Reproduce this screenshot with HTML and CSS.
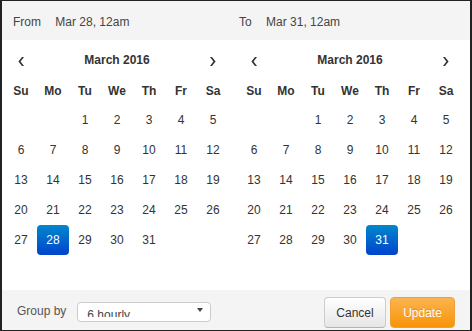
FILE: index.html
```html
<!DOCTYPE html>
<html lang="en">
<head>
    <meta charset="UTF-8">
    <meta name="viewport" content="width=device-width, initial-scale=1.0">
    <title>Date Range Picker</title>
    <link rel="stylesheet" href="styles.css">
</head>
<body>
    <div class="picker">
        <div class="range-bar">
            <div class="range-field range-from">
                <span class="range-label">From</span>
                <span class="range-value">Mar 28, 12am</span>
            </div>
            <div class="range-field">
                <span class="range-label">To</span>
                <span class="range-value">Mar 31, 12am</span>
            </div>
        </div>

        <div class="calendars">
            <div class="calendar" data-selected="28"></div>
            <div class="calendar" data-selected="31"></div>
        </div>

        <div class="footer">
            <span class="group-label">Group by</span>
            <div class="select">
                <div class="select-value">6 hourly</div>
                <span class="select-arrow"></span>
            </div>
            <div class="buttons">
                <button class="btn btn-cancel">Cancel</button>
                <button class="btn btn-update">Update</button>
            </div>
        </div>
    </div>

    <script>
        // build both month grids (March 2016 starts on a Tuesday)
        var chevronLeft = '<svg width="6" height="9" viewBox="0 0 6 9"><polygon points="4,0 6,0 2.6,4.5 6,9 4,9 0.4,4.5" fill="#333"/></svg>';
        var chevronRight = '<svg width="6" height="9" viewBox="0 0 6 9"><polygon points="2,0 0,0 3.4,4.5 0,9 2,9 5.6,4.5" fill="#333"/></svg>';
        var weekdays = ["Su", "Mo", "Tu", "We", "Th", "Fr", "Sa"];

        document.querySelectorAll(".calendar").forEach(function (cal) {
            var selected = cal.getAttribute("data-selected");
            var html = '<span class="cell nav">' + chevronLeft + '</span>';
            html += '<span class="month">March 2016</span>';
            html += '<span class="cell nav">' + chevronRight + '</span>';
            weekdays.forEach(function (d) {
                html += '<span class="cell dow">' + d + '</span>';
            });
            for (var i = 0; i < 2; i++) {
                html += '<span class="cell"></span>';
            }
            for (var day = 1; day <= 31; day++) {
                var cls = day == selected ? "cell day active" : "cell day";
                html += '<span class="' + cls + '">' + day + '</span>';
            }
            cal.innerHTML = html;
        });
    </script>
</body>
</html>
```

FILE: styles.css
```css
body {
    margin: 0;
    font-family: "Liberation Sans", Arial, sans-serif;
    font-size: 12px;
    color: #333;
}
.picker {
    width: 472px;
    height: 331px;
    box-sizing: border-box;
    border-style: solid;
    border-color: #222;
    border-width: 1px 2px 1px 2px;
    background-color: #fff;
    display: flex;
    flex-direction: column;
}
/* ---------------------------range bar------------------------------ */
.range-bar {
    height: 39px;
    display: flex;
    align-items: center;
    padding-left: 11px;
    padding-top: 2px;
    box-sizing: border-box;
    background-color: #f4f4f4;
    color: #444;
}
.range-from {
    width: 226px;
}
.range-label {
    margin-right: 11px;
}
/* ---------------------------calendars------------------------------ */
.calendars {
    display: flex;
    gap: 9px;
    padding: 5px 3px 5px 3px;
}
.calendar {
    width: 224px;
    display: grid;
    grid-template-columns: repeat(7, 32px);
    grid-auto-rows: 30px;
    grid-template-rows: repeat(8, 30px);
}
.cell {
    display: flex;
    align-items: center;
    justify-content: center;
}
.nav {
    padding-top: 3px;
}
.month {
    grid-column: span 5;
    display: flex;
    align-items: center;
    justify-content: center;
    font-weight: bold;
}
.dow {
    font-weight: bold;
    padding-top: 1px;
}
.day.active {
    color: #fff;
    border-radius: 4px;
    background: linear-gradient(to bottom, #0088cc, #0044cc);
}
/* ---------------------------footer------------------------------ */
.footer {
    height: 40px;
    box-sizing: border-box;
    display: flex;
    align-items: center;
    padding: 2px 15px 0 15px;
    background-color: #f4f4f4;
}
.group-label {
    color: #555;
    margin-right: 11px;
}
.select {
    position: relative;
    width: 134px;
    height: 20px;
    box-sizing: border-box;
    margin-top: 1px;
    border: 1px solid #ccc;
    border-radius: 4px;
    background-color: #fff;
}
.select-value {
    margin: 5px 0 0 9px;
    height: 9px;
    line-height: 14px;
    overflow: hidden;
    color: #444;
}
.select-arrow {
    position: absolute;
    right: 7px;
    top: 5px;
    border-left: 3px solid transparent;
    border-right: 3px solid transparent;
    border-top: 4px solid #444;
}
.buttons {
    margin-left: auto;
    display: flex;
    gap: 4px;
    margin-top: 3px;
}
.btn {
    height: 31px;
    border-radius: 4px;
    font-family: "Liberation Sans", Arial, sans-serif;
    font-size: 12px;
    padding: 0;
    cursor: pointer;
}
.btn-cancel {
    width: 62px;
    color: #333;
    border: 1px solid #ccc;
    border-bottom-color: #b3b3b3;
    background: linear-gradient(to bottom, #ffffff, #e6e6e6);
}
.btn-update {
    width: 65px;
    color: #fff;
    border: 1px solid #f0a030;
    background: linear-gradient(to bottom, #fbb450, #f89406);
    text-shadow: 0 -1px 0 rgba(0, 0, 0, 0.15);
}
```
